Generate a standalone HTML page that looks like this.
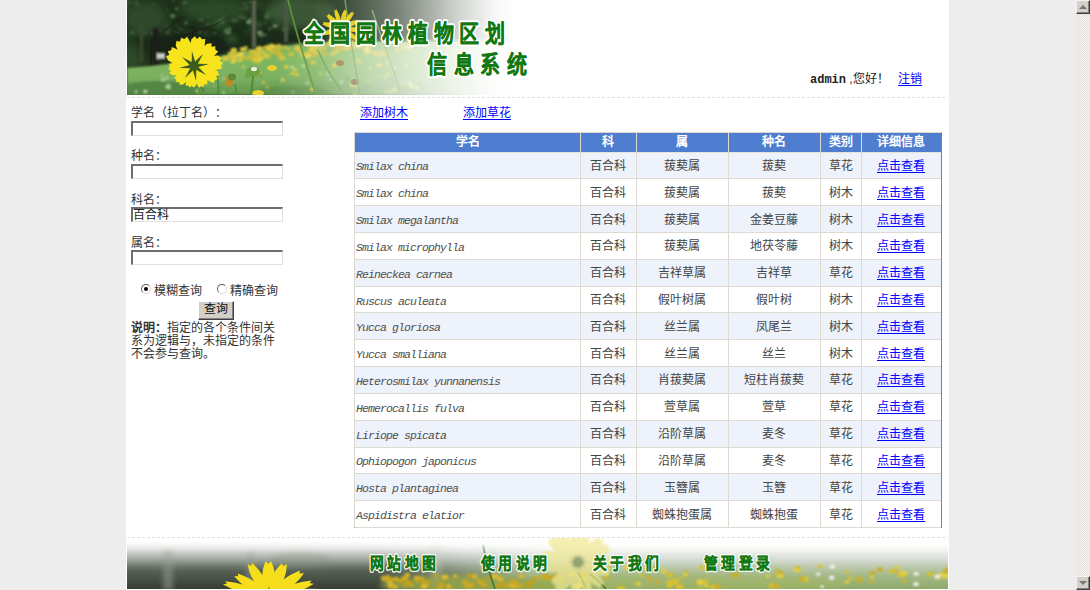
<!DOCTYPE html>
<html lang="zh-CN"><head><meta charset="utf-8">
<style>
*{margin:0;padding:0;box-sizing:border-box}
html,body{text-spacing-trim:space-all;width:1090px;height:590px;overflow:hidden;background:#ededed;font-family:"Liberation Sans",sans-serif;font-size:12px;color:#222}
.abs{position:absolute}
#wrap{position:absolute;left:126px;top:0;width:823px;height:590px;background:#fff}
.dots{position:absolute;height:1px;background:repeating-linear-gradient(to right,#e0e0e0 0 3px,transparent 3px 5px)}
a{color:#0000ff;text-decoration:underline;text-underline-offset:2px}
.lbl{margin-top:1px;position:absolute;left:131px;font-size:12px;line-height:12px;color:#333;white-space:nowrap}
.inp{position:absolute;left:131px;width:152px;height:15px;background:#fff;border-top:2px solid #6e6e6e;border-left:2px solid #6e6e6e;border-right:1px solid #e2e0d8;border-bottom:1px solid #e2e0d8}
.row{position:absolute;left:355px;width:586px}
.hl{position:absolute;left:355px;width:586px;height:1px;background:#dedad2}
.vl{position:absolute;width:1px;background:#dedad2}
.c{position:absolute;transform:translateY(-50%);white-space:nowrap;line-height:14px}
.cn{margin-top:1px;text-align:center;font-size:12px;color:#444}
.sci{margin-top:2.5px;margin-left:-1px;font-family:"Liberation Mono",monospace;font-style:italic;font-size:11.5px;letter-spacing:-0.9px;color:#505050}
.th{position:absolute;top:133px;height:19px;line-height:19px;text-align:center;color:#fff;font-weight:bold;font-size:12px}
.title{position:absolute;font-family:"Liberation Serif",serif;font-weight:bold;color:#167a16;font-size:22px;line-height:24px;letter-spacing:3px;white-space:nowrap;
text-shadow:1px 0 #fff,-1px 0 #fff,0 1px #fff,0 -1px #fff,1px 1px #fff,-1px -1px #fff,1px -1px #fff,-1px 1px #fff,2px 0 #fff,-2px 0 #fff,0 2px #fff,0 -2px #fff}
.ft{position:absolute;top:555px;font-family:"Liberation Serif",serif;font-weight:bold;color:#167a16;font-size:15px;line-height:16px;letter-spacing:3px;white-space:nowrap;
text-shadow:1px 0 #fff,-1px 0 #fff,0 1px #fff,0 -1px #fff,1px 1px #fff,-1px -1px #fff,1px -1px #fff,-1px 1px #fff}
</style></head><body>
<div id="wrap"></div>
<svg class="abs" style="left:127px;top:0" width="421" height="95" viewBox="127 0 421 95">
<defs>
<linearGradient id="hf" x1="0" y1="0" x2="0" y2="1"><stop offset="0" stop-color="#1e301b"/><stop offset=".5" stop-color="#192a17"/><stop offset="1" stop-color="#2a4224"/></linearGradient>
<linearGradient id="hg" x1="0" y1="0" x2="0" y2="1"><stop offset="0" stop-color="#66a446"/><stop offset=".3" stop-color="#7eb85e"/><stop offset=".7" stop-color="#7cb062"/><stop offset="1" stop-color="#62944e"/></linearGradient>
<linearGradient id="hz" x1="0" y1="0" x2="1" y2="0"><stop offset="0" stop-color="#fff" stop-opacity="0"/><stop offset=".44" stop-color="#fff" stop-opacity="0"/><stop offset=".52" stop-color="#fff" stop-opacity=".15"/><stop offset=".64" stop-color="#fff" stop-opacity=".4"/><stop offset=".78" stop-color="#fff" stop-opacity=".78"/><stop offset=".87" stop-color="#fff" stop-opacity=".96"/><stop offset=".92" stop-color="#fff" stop-opacity="1"/></linearGradient>
<filter id="b1" x="-10%" y="-10%" width="120%" height="120%"><feGaussianBlur stdDeviation="1"/></filter>
<filter id="b2" x="-20%" y="-20%" width="140%" height="140%"><feGaussianBlur stdDeviation="2.5"/></filter>
<filter id="b4" x="-30%" y="-30%" width="160%" height="160%"><feGaussianBlur stdDeviation="5"/></filter>
<filter id="b05" x="-10%" y="-10%" width="120%" height="120%"><feGaussianBlur stdDeviation="0.6"/></filter>
</defs>
<rect x="127" y="0" width="421" height="95" fill="url(#hf)"/>
<g filter="url(#b2)">
<ellipse cx="218.8" cy="22.4" rx="8.0" ry="5.7" fill="#32502e" opacity="1"/>
<ellipse cx="218.7" cy="34.2" rx="3.9" ry="2.8" fill="#243c22" opacity="1"/>
<ellipse cx="223.6" cy="24.6" rx="3.8" ry="2.7" fill="#32502e" opacity="1"/>
<ellipse cx="188.6" cy="3.6" rx="7.3" ry="5.2" fill="#243c22" opacity="1"/>
<ellipse cx="255.8" cy="23.8" rx="5.0" ry="3.6" fill="#32502e" opacity="1"/>
<ellipse cx="259.7" cy="24.6" rx="3.7" ry="2.6" fill="#2a4626" opacity="1"/>
<ellipse cx="295.8" cy="2.5" rx="3.0" ry="2.1" fill="#2a4626" opacity="1"/>
<ellipse cx="248.7" cy="31.1" rx="4.6" ry="3.3" fill="#243c22" opacity="1"/>
<ellipse cx="298.0" cy="20.8" rx="6.4" ry="4.6" fill="#32502e" opacity="1"/>
<ellipse cx="127.9" cy="3.4" rx="6.5" ry="4.6" fill="#32502e" opacity="1"/>
<ellipse cx="329.5" cy="39.8" rx="7.5" ry="5.4" fill="#243c22" opacity="1"/>
<ellipse cx="178.6" cy="30.3" rx="5.7" ry="4.1" fill="#2a4626" opacity="1"/>
<ellipse cx="141.3" cy="30.7" rx="5.0" ry="3.6" fill="#32502e" opacity="1"/>
<ellipse cx="205.5" cy="38.3" rx="7.5" ry="5.4" fill="#2a4626" opacity="1"/>
<ellipse cx="170.3" cy="37.1" rx="3.1" ry="2.2" fill="#32502e" opacity="1"/>
<ellipse cx="326.0" cy="15.9" rx="3.2" ry="2.3" fill="#243c22" opacity="1"/>
<ellipse cx="167.3" cy="27.0" rx="4.7" ry="3.3" fill="#32502e" opacity="1"/>
<ellipse cx="194.5" cy="38.6" rx="7.0" ry="5.0" fill="#2a4626" opacity="1"/>
<ellipse cx="154.3" cy="28.3" rx="2.9" ry="2.0" fill="#32502e" opacity="1"/>
<ellipse cx="288.8" cy="7.1" rx="5.9" ry="4.2" fill="#32502e" opacity="1"/>
<ellipse cx="230.3" cy="39.4" rx="7.1" ry="5.1" fill="#32502e" opacity="1"/>
<ellipse cx="257.7" cy="4.7" rx="5.2" ry="3.7" fill="#2a4626" opacity="1"/>
<ellipse cx="127.1" cy="34.6" rx="8.3" ry="5.9" fill="#243c22" opacity="1"/>
<ellipse cx="188.7" cy="35.4" rx="4.0" ry="2.8" fill="#32502e" opacity="1"/>
<ellipse cx="329.2" cy="24.1" rx="6.0" ry="4.3" fill="#2a4626" opacity="1"/>
</g>
<g filter="url(#b1)">
<ellipse cx="248.7" cy="7.5" rx="1.6" ry="1.2" fill="#3a5a34" opacity="1"/>
<ellipse cx="167.5" cy="10.4" rx="1.3" ry="0.9" fill="#44643c" opacity="1"/>
<ellipse cx="152.7" cy="22.3" rx="1.2" ry="0.8" fill="#50704a" opacity="1"/>
<ellipse cx="172.7" cy="15.9" rx="3.0" ry="2.1" fill="#50704a" opacity="1"/>
<ellipse cx="229.4" cy="4.8" rx="1.9" ry="1.3" fill="#3a5a34" opacity="1"/>
<ellipse cx="146.0" cy="31.8" rx="2.7" ry="1.9" fill="#44643c" opacity="1"/>
<ellipse cx="216.2" cy="5.5" rx="2.4" ry="1.7" fill="#3a5a34" opacity="1"/>
<ellipse cx="151.2" cy="33.3" rx="2.8" ry="2.0" fill="#3a5a34" opacity="1"/>
<ellipse cx="136.7" cy="1.7" rx="1.3" ry="1.0" fill="#3a5a34" opacity="1"/>
<ellipse cx="245.4" cy="8.3" rx="2.5" ry="1.8" fill="#50704a" opacity="1"/>
<ellipse cx="178.8" cy="31.7" rx="2.1" ry="1.5" fill="#3a5a34" opacity="1"/>
<ellipse cx="148.6" cy="25.2" rx="1.3" ry="0.9" fill="#44643c" opacity="1"/>
<ellipse cx="186.0" cy="22.9" rx="2.3" ry="1.7" fill="#44643c" opacity="1"/>
<ellipse cx="161.5" cy="32.1" rx="1.5" ry="1.1" fill="#44643c" opacity="1"/>
<ellipse cx="135.5" cy="14.4" rx="1.6" ry="1.1" fill="#44643c" opacity="1"/>
<ellipse cx="148.7" cy="12.9" rx="2.2" ry="1.6" fill="#44643c" opacity="1"/>
<ellipse cx="138.3" cy="4.8" rx="2.0" ry="1.4" fill="#50704a" opacity="1"/>
<ellipse cx="207.8" cy="24.2" rx="2.3" ry="1.6" fill="#44643c" opacity="1"/>
<ellipse cx="199.6" cy="32.3" rx="2.1" ry="1.5" fill="#50704a" opacity="1"/>
<ellipse cx="213.2" cy="33.7" rx="1.2" ry="0.8" fill="#3a5a34" opacity="1"/>
<ellipse cx="136.2" cy="2.4" rx="1.7" ry="1.2" fill="#44643c" opacity="1"/>
<ellipse cx="249.9" cy="2.6" rx="2.2" ry="1.6" fill="#3a5a34" opacity="1"/>
<ellipse cx="132.5" cy="32.8" rx="2.6" ry="1.8" fill="#44643c" opacity="1"/>
<ellipse cx="224.6" cy="32.0" rx="1.8" ry="1.3" fill="#3a5a34" opacity="1"/>
<ellipse cx="185.2" cy="2.7" rx="2.8" ry="2.0" fill="#44643c" opacity="1"/>
<ellipse cx="233.2" cy="20.0" rx="2.3" ry="1.7" fill="#50704a" opacity="1"/>
<ellipse cx="173.6" cy="0.4" rx="1.3" ry="0.9" fill="#44643c" opacity="1"/>
<ellipse cx="205.6" cy="34.8" rx="2.8" ry="2.0" fill="#3a5a34" opacity="1"/>
<ellipse cx="167.6" cy="32.7" rx="2.5" ry="1.8" fill="#50704a" opacity="1"/>
<ellipse cx="181.2" cy="29.3" rx="1.3" ry="0.9" fill="#3a5a34" opacity="1"/>
<ellipse cx="130.7" cy="21.0" rx="2.1" ry="1.5" fill="#44643c" opacity="1"/>
<ellipse cx="244.8" cy="4.0" rx="2.6" ry="1.9" fill="#3a5a34" opacity="1"/>
<ellipse cx="240.2" cy="9.0" rx="1.1" ry="0.8" fill="#50704a" opacity="1"/>
<ellipse cx="144.6" cy="21.4" rx="2.1" ry="1.5" fill="#50704a" opacity="1"/>
<ellipse cx="208.2" cy="15.5" rx="2.9" ry="2.0" fill="#50704a" opacity="1"/>
<ellipse cx="176.8" cy="8.8" rx="2.4" ry="1.7" fill="#44643c" opacity="1"/>
<ellipse cx="235.3" cy="13.5" rx="2.3" ry="1.6" fill="#50704a" opacity="1"/>
<ellipse cx="152.8" cy="4.7" rx="1.8" ry="1.3" fill="#44643c" opacity="1"/>
<ellipse cx="214.5" cy="33.3" rx="1.7" ry="1.2" fill="#44643c" opacity="1"/>
<ellipse cx="140.9" cy="16.5" rx="2.9" ry="2.1" fill="#50704a" opacity="1"/>
<ellipse cx="249.7" cy="20.6" rx="2.6" ry="1.9" fill="#4a6a44" opacity="1"/>
<ellipse cx="309.1" cy="34.5" rx="2.1" ry="1.5" fill="#5a7a52" opacity="1"/>
<ellipse cx="307.7" cy="13.3" rx="2.5" ry="1.8" fill="#4a6a44" opacity="1"/>
<ellipse cx="292.1" cy="22.1" rx="1.8" ry="1.3" fill="#4a6a44" opacity="1"/>
<ellipse cx="202.5" cy="9.1" rx="2.1" ry="1.5" fill="#5a7a52" opacity="1"/>
<ellipse cx="300.0" cy="13.0" rx="2.9" ry="2.0" fill="#5a7a52" opacity="1"/>
<ellipse cx="327.9" cy="8.5" rx="1.4" ry="1.0" fill="#4a6a44" opacity="1"/>
<ellipse cx="285.2" cy="29.2" rx="3.3" ry="2.3" fill="#4a6a44" opacity="1"/>
<ellipse cx="225.7" cy="29.7" rx="1.7" ry="1.2" fill="#4a6a44" opacity="1"/>
<ellipse cx="201.4" cy="19.2" rx="2.7" ry="1.9" fill="#5a7a52" opacity="1"/>
<ellipse cx="229.4" cy="28.4" rx="2.3" ry="1.7" fill="#4a6a44" opacity="1"/>
<ellipse cx="265.1" cy="34.9" rx="1.5" ry="1.1" fill="#4a6a44" opacity="1"/>
<ellipse cx="317.8" cy="7.6" rx="3.2" ry="2.3" fill="#4a6a44" opacity="1"/>
<ellipse cx="250.4" cy="18.5" rx="1.6" ry="1.1" fill="#5a7a52" opacity="1"/>
<ellipse cx="249.0" cy="22.1" rx="3.1" ry="2.2" fill="#6a8a60" opacity="1"/>
<ellipse cx="260.3" cy="24.5" rx="1.6" ry="1.1" fill="#4a6a44" opacity="1"/>
<ellipse cx="312.6" cy="28.9" rx="3.2" ry="2.3" fill="#5a7a52" opacity="1"/>
<ellipse cx="227.7" cy="32.0" rx="3.3" ry="2.4" fill="#6a8a60" opacity="1"/>
<ellipse cx="269.8" cy="28.7" rx="1.8" ry="1.3" fill="#4a6a44" opacity="1"/>
<ellipse cx="311.3" cy="15.5" rx="1.3" ry="0.9" fill="#6a8a60" opacity="1"/>
<ellipse cx="244.5" cy="17.6" rx="1.7" ry="1.2" fill="#5a7a52" opacity="1"/>
<ellipse cx="228.4" cy="31.0" rx="2.1" ry="1.5" fill="#5a7a52" opacity="1"/>
<ellipse cx="222.5" cy="15.1" rx="2.9" ry="2.1" fill="#5a7a52" opacity="1"/>
<ellipse cx="261.2" cy="35.0" rx="3.1" ry="2.2" fill="#4a6a44" opacity="1"/>
<ellipse cx="309.2" cy="25.7" rx="3.2" ry="2.3" fill="#6a8a60" opacity="1"/>
<ellipse cx="275.3" cy="25.7" rx="2.8" ry="2.0" fill="#6a8a60" opacity="1"/>
<ellipse cx="268.5" cy="13.7" rx="2.8" ry="2.0" fill="#4a6a44" opacity="1"/>
<ellipse cx="221.4" cy="20.4" rx="3.2" ry="2.3" fill="#6a8a60" opacity="1"/>
<ellipse cx="240.5" cy="16.4" rx="3.0" ry="2.2" fill="#4a6a44" opacity="1"/>
<ellipse cx="227.1" cy="30.5" rx="3.3" ry="2.3" fill="#4a6a44" opacity="1"/>
<ellipse cx="235.5" cy="19.9" rx="2.0" ry="1.5" fill="#5a7a52" opacity="1"/>
<ellipse cx="265.4" cy="23.2" rx="1.2" ry="0.8" fill="#5a7a52" opacity="1"/>
<ellipse cx="267.1" cy="17.0" rx="2.9" ry="2.1" fill="#4a6a44" opacity="1"/>
<ellipse cx="215.9" cy="7.8" rx="1.5" ry="1.1" fill="#4a6a44" opacity="1"/>
<ellipse cx="259.7" cy="32.6" rx="2.9" ry="2.1" fill="#6a8a60" opacity="1"/>
</g>
<g fill="none" stroke="#1c1e16" filter="url(#b05)" opacity=".8">
<path d="M150,80 L152,40 L140,15 L130,5" stroke-width="2"/>
<path d="M152,40 L175,22 L200,8" stroke-width="1.5"/>
<path d="M145,28 L127,14" stroke-width="1.2"/>
<path d="M170,26 L185,35 L215,25 L240,10" stroke-width="1.2"/>
<path d="M190,50 L195,20" stroke-width="1.2"/>
</g>
<g filter="url(#b4)">
<ellipse cx="145" cy="18" rx="22" ry="16" fill="#2e4a2a"/>
<ellipse cx="215" cy="10" rx="35" ry="12" fill="#2c4828"/>
<ellipse cx="300" cy="12" rx="35" ry="16" fill="#3a5636"/>
<ellipse cx="190" cy="45" rx="40" ry="12" fill="#162414"/>
<ellipse cx="130" cy="60" rx="12" ry="18" fill="#2a4a28"/>
</g>
<g filter="url(#b1)">
<rect x="153" y="28" width="5" height="52" fill="#1a1f14"/>
<rect x="140" y="22" width="3" height="40" fill="#3a4632"/>
<rect x="252" y="0" width="4" height="48" fill="#5a6450"/>
<rect x="284" y="0" width="4" height="42" fill="#4a5644"/>
<rect x="157" y="53" width="8" height="6" fill="#c8ccc0"/>
</g>
<path d="M127,68 L150,66 L185,62 L220,56 L250,50 L290,45 L330,42 L420,40 L548,38 L548,95 L127,95Z" fill="url(#hg)" filter="url(#b1)"/>
<g filter="url(#b1)">
<ellipse cx="160" cy="90" rx="45" ry="9" fill="#4e7e40" opacity=".8"/>
<ellipse cx="290" cy="92" rx="40" ry="6" fill="#5a8a48" opacity=".6"/>
<ellipse cx="263.1" cy="52.4" rx="2.1" ry="1.4" fill="#e4d048"/>
<ellipse cx="384.3" cy="52.9" rx="4.0" ry="2.7" fill="#c8b838"/>
<ellipse cx="238.5" cy="54.1" rx="1.9" ry="1.2" fill="#c8b838"/>
<ellipse cx="241.7" cy="58.8" rx="1.9" ry="1.2" fill="#dcc83c"/>
<ellipse cx="245.6" cy="47.7" rx="2.5" ry="1.7" fill="#c8b838"/>
<ellipse cx="259.2" cy="53.1" rx="3.0" ry="2.0" fill="#d0c040"/>
<ellipse cx="366.7" cy="48.9" rx="3.5" ry="2.3" fill="#e4d048"/>
<ellipse cx="225.5" cy="58.5" rx="3.8" ry="2.5" fill="#dcc83c"/>
<ellipse cx="304.6" cy="54.8" rx="3.1" ry="2.1" fill="#dcc83c"/>
<ellipse cx="303.6" cy="54.7" rx="3.3" ry="2.2" fill="#dcc83c"/>
<ellipse cx="257.4" cy="56.6" rx="3.7" ry="2.5" fill="#dcc83c"/>
<ellipse cx="270.5" cy="49.6" rx="4.0" ry="2.7" fill="#dcc83c"/>
<ellipse cx="340.2" cy="43.5" rx="2.0" ry="1.4" fill="#dcc83c"/>
<ellipse cx="242.1" cy="49.1" rx="2.7" ry="1.8" fill="#e4d048"/>
<ellipse cx="359.6" cy="46.2" rx="3.7" ry="2.5" fill="#dcc83c"/>
<ellipse cx="252.5" cy="55.6" rx="3.7" ry="2.5" fill="#d0c040"/>
<ellipse cx="252.5" cy="56.3" rx="4.0" ry="2.7" fill="#c8b838"/>
<ellipse cx="239.5" cy="55.2" rx="3.6" ry="2.4" fill="#dcc83c"/>
<ellipse cx="349.0" cy="47.3" rx="1.9" ry="1.2" fill="#e4d048"/>
<ellipse cx="244.3" cy="50.2" rx="2.3" ry="1.5" fill="#dcc83c"/>
<ellipse cx="416.5" cy="52.1" rx="2.0" ry="1.4" fill="#d0c040"/>
<ellipse cx="242.4" cy="57.4" rx="2.0" ry="1.3" fill="#d0c040"/>
<ellipse cx="272.3" cy="51.6" rx="3.0" ry="2.0" fill="#e4d048"/>
<ellipse cx="253.9" cy="51.9" rx="3.3" ry="2.2" fill="#d0c040"/>
<ellipse cx="363.9" cy="42.8" rx="2.9" ry="1.9" fill="#c8b838"/>
<ellipse cx="284.8" cy="46.9" rx="2.2" ry="1.5" fill="#d0c040"/>
<ellipse cx="271.8" cy="46.3" rx="3.8" ry="2.5" fill="#e4d048"/>
<ellipse cx="308.4" cy="45.1" rx="3.2" ry="2.1" fill="#c8b838"/>
<ellipse cx="349.7" cy="44.2" rx="4.0" ry="2.7" fill="#dcc83c"/>
<ellipse cx="353.3" cy="46.2" rx="4.0" ry="2.6" fill="#c8b838"/>
<ellipse cx="336.2" cy="51.6" rx="2.8" ry="1.8" fill="#dcc83c"/>
<ellipse cx="232.7" cy="53.7" rx="2.9" ry="2.0" fill="#d0c040"/>
<ellipse cx="379.7" cy="53.8" rx="4.0" ry="2.6" fill="#d0c040"/>
<ellipse cx="257.3" cy="59.5" rx="3.4" ry="2.3" fill="#c8b838"/>
<ellipse cx="254.8" cy="52.2" rx="2.2" ry="1.5" fill="#d0c040"/>
<ellipse cx="282.3" cy="58.3" rx="3.3" ry="2.2" fill="#d0c040"/>
<ellipse cx="334.2" cy="54.6" rx="1.9" ry="1.2" fill="#d0c040"/>
<ellipse cx="328.7" cy="44.7" rx="2.8" ry="1.8" fill="#d0c040"/>
<ellipse cx="334.1" cy="50.0" rx="1.8" ry="1.2" fill="#c8b838"/>
<ellipse cx="260.1" cy="58.7" rx="3.1" ry="2.1" fill="#e4d048"/>
<ellipse cx="408.2" cy="47.2" rx="4.2" ry="2.8" fill="#e4d048"/>
<ellipse cx="351.4" cy="41.6" rx="3.2" ry="2.2" fill="#d0c040"/>
<ellipse cx="281.8" cy="57.5" rx="2.7" ry="1.8" fill="#dcc83c"/>
<ellipse cx="368.0" cy="47.7" rx="3.2" ry="2.2" fill="#e4d048"/>
<ellipse cx="400.3" cy="45.3" rx="3.1" ry="2.0" fill="#c8b838"/>
<ellipse cx="278.5" cy="48.6" rx="3.4" ry="2.2" fill="#c8b838"/>
<ellipse cx="319.6" cy="52.2" rx="1.9" ry="1.2" fill="#dcc83c"/>
<ellipse cx="310.3" cy="51.2" rx="2.8" ry="1.9" fill="#e4d048"/>
<ellipse cx="230.0" cy="53.6" rx="2.8" ry="1.8" fill="#c8b838"/>
<ellipse cx="233.2" cy="61.5" rx="2.8" ry="1.9" fill="#e4d048"/>
<ellipse cx="260.1" cy="56.6" rx="1.9" ry="1.3" fill="#d0c040"/>
<ellipse cx="397.4" cy="49.6" rx="2.9" ry="1.9" fill="#dcc83c"/>
<ellipse cx="312.4" cy="43.8" rx="3.3" ry="2.2" fill="#e4d048"/>
<ellipse cx="239.9" cy="60.2" rx="2.7" ry="1.8" fill="#dcc83c"/>
<ellipse cx="240.9" cy="54.2" rx="3.4" ry="2.3" fill="#e4d048"/>
<ellipse cx="312.1" cy="51.1" rx="3.4" ry="2.3" fill="#c8b838"/>
<ellipse cx="340.1" cy="48.2" rx="4.2" ry="2.8" fill="#c8b838"/>
<ellipse cx="328.1" cy="44.5" rx="2.1" ry="1.4" fill="#c8b838"/>
<ellipse cx="342.4" cy="49.5" rx="2.7" ry="1.8" fill="#c8b838"/>
<ellipse cx="313.2" cy="52.3" rx="3.5" ry="2.3" fill="#dcc83c"/>
<ellipse cx="316.0" cy="52.5" rx="2.3" ry="1.5" fill="#dcc83c"/>
<ellipse cx="300.3" cy="52.1" rx="2.3" ry="1.5" fill="#d0c040"/>
<ellipse cx="315.4" cy="42.1" rx="2.4" ry="1.6" fill="#d0c040"/>
<ellipse cx="314.8" cy="43.4" rx="3.1" ry="2.1" fill="#d0c040"/>
<ellipse cx="332.1" cy="53.7" rx="2.2" ry="1.5" fill="#dcc83c"/>
<ellipse cx="315.7" cy="47.2" rx="2.9" ry="2.0" fill="#dcc83c"/>
<ellipse cx="274.1" cy="51.9" rx="2.1" ry="1.4" fill="#d0c040"/>
<ellipse cx="348.8" cy="46.8" rx="3.8" ry="2.5" fill="#dcc83c"/>
<ellipse cx="291.1" cy="54.1" rx="2.7" ry="1.8" fill="#dcc83c"/>
<ellipse cx="279.0" cy="53.7" rx="4.2" ry="2.8" fill="#c8b838"/>
<ellipse cx="266.5" cy="56.1" rx="3.8" ry="2.5" fill="#dcc83c"/>
<ellipse cx="288.4" cy="49.0" rx="2.0" ry="1.4" fill="#c8b838"/>
<ellipse cx="233.9" cy="49.9" rx="3.2" ry="2.1" fill="#e4d048"/>
<ellipse cx="353.5" cy="47.0" rx="3.8" ry="2.5" fill="#d0c040"/>
<ellipse cx="233.6" cy="51.8" rx="3.4" ry="2.3" fill="#d0c040"/>
<ellipse cx="323.4" cy="48.4" rx="3.6" ry="2.4" fill="#c8b838"/>
<ellipse cx="265.3" cy="47.6" rx="2.7" ry="1.8" fill="#c8b838"/>
<ellipse cx="278.6" cy="46.2" rx="3.5" ry="2.3" fill="#c8b838"/>
<ellipse cx="290.1" cy="55.0" rx="2.5" ry="1.7" fill="#c8b838"/>
<ellipse cx="255.6" cy="60.0" rx="3.6" ry="2.4" fill="#dcc83c"/>
<ellipse cx="234.8" cy="60.3" rx="1.9" ry="1.2" fill="#e4d048"/>
<ellipse cx="310.2" cy="53.5" rx="3.6" ry="2.4" fill="#c8b838"/>
<ellipse cx="346.9" cy="48.2" rx="3.8" ry="2.5" fill="#dcc83c"/>
<ellipse cx="248.8" cy="57.8" rx="3.9" ry="2.6" fill="#c8b838"/>
<ellipse cx="352.3" cy="43.6" rx="1.9" ry="1.3" fill="#dcc83c"/>
<ellipse cx="308.1" cy="56.0" rx="3.4" ry="2.2" fill="#e4d048"/>
<ellipse cx="231.7" cy="56.6" rx="3.7" ry="2.5" fill="#d0c040"/>
<ellipse cx="273.5" cy="48.8" rx="2.1" ry="1.4" fill="#c8b838"/>
<ellipse cx="234.9" cy="57.5" rx="2.1" ry="1.4" fill="#e4d048"/>
<ellipse cx="259.3" cy="49.2" rx="3.6" ry="2.4" fill="#c8b838"/>
<ellipse cx="335.3" cy="46.4" rx="2.6" ry="1.7" fill="#c8b838"/>
<ellipse cx="320.7" cy="48.5" rx="3.1" ry="2.1" fill="#d0c040"/>
<ellipse cx="325.0" cy="54.1" rx="2.8" ry="1.9" fill="#c8b838"/>
<ellipse cx="367.3" cy="51.5" rx="3.8" ry="2.5" fill="#e4d048"/>
<ellipse cx="404.8" cy="48.3" rx="3.1" ry="2.0" fill="#d0c040"/>
<ellipse cx="348.8" cy="46.5" rx="2.8" ry="1.9" fill="#dcc83c"/>
<ellipse cx="259.3" cy="48.3" rx="3.3" ry="2.2" fill="#dcc83c"/>
<ellipse cx="271.3" cy="50.6" rx="3.1" ry="2.0" fill="#c8b838"/>
<ellipse cx="409.1" cy="40.1" rx="2.5" ry="1.7" fill="#d0c040"/>
<ellipse cx="268.6" cy="47.5" rx="4.0" ry="2.7" fill="#d0c040"/>
<ellipse cx="331.1" cy="41.2" rx="3.0" ry="2.0" fill="#d0c040"/>
<ellipse cx="270.0" cy="48.0" rx="2.7" ry="1.8" fill="#dcc83c"/>
<ellipse cx="312.0" cy="48.8" rx="3.0" ry="2.0" fill="#e4d048"/>
<ellipse cx="250.1" cy="51.0" rx="2.2" ry="1.5" fill="#c8b838"/>
<ellipse cx="315.2" cy="55.2" rx="3.1" ry="2.1" fill="#c8b838"/>
<ellipse cx="297.6" cy="48.8" rx="4.1" ry="2.7" fill="#d0c040"/>
<ellipse cx="297.2" cy="46.3" rx="1.9" ry="1.3" fill="#dcc83c"/>
<ellipse cx="348.5" cy="46.0" rx="3.1" ry="2.0" fill="#c8b838"/>
<ellipse cx="343.6" cy="41.5" rx="4.0" ry="2.7" fill="#d0c040"/>
<ellipse cx="374.7" cy="52.7" rx="2.9" ry="1.9" fill="#dcc83c"/>
<ellipse cx="368.4" cy="81.2" rx="1.7" ry="1.2" fill="#e0d040" opacity="1"/>
<ellipse cx="378.9" cy="65.1" rx="2.9" ry="2.1" fill="#e0d040" opacity="1"/>
<ellipse cx="354.7" cy="94.8" rx="1.8" ry="1.3" fill="#e0d040" opacity="1"/>
<ellipse cx="267.1" cy="87.0" rx="1.4" ry="1.0" fill="#e0d040" opacity="1"/>
<ellipse cx="388.0" cy="62.9" rx="1.9" ry="1.3" fill="#e0d040" opacity="1"/>
<ellipse cx="400.1" cy="84.3" rx="1.5" ry="1.1" fill="#d8c838" opacity="1"/>
<ellipse cx="243.4" cy="66.6" rx="1.7" ry="1.2" fill="#e0d040" opacity="1"/>
<ellipse cx="380.7" cy="75.4" rx="1.5" ry="1.0" fill="#d8c838" opacity="1"/>
<ellipse cx="334.6" cy="65.5" rx="2.8" ry="2.0" fill="#d8c838" opacity="1"/>
<ellipse cx="296.9" cy="74.2" rx="2.3" ry="1.7" fill="#d8c838" opacity="1"/>
<ellipse cx="360.1" cy="62.3" rx="1.5" ry="1.1" fill="#e0d040" opacity="1"/>
<ellipse cx="259.0" cy="73.8" rx="2.2" ry="1.6" fill="#e0d040" opacity="1"/>
<ellipse cx="357.7" cy="60.4" rx="2.0" ry="1.5" fill="#d8c838" opacity="1"/>
<ellipse cx="282.7" cy="79.7" rx="2.2" ry="1.5" fill="#e0d040" opacity="1"/>
<ellipse cx="394.1" cy="89.6" rx="2.6" ry="1.9" fill="#e0d040" opacity="1"/>
<ellipse cx="292.3" cy="73.2" rx="2.3" ry="1.6" fill="#d8c838" opacity="1"/>
<ellipse cx="411.7" cy="86.4" rx="2.3" ry="1.7" fill="#e0d040" opacity="1"/>
<ellipse cx="286.2" cy="67.0" rx="2.6" ry="1.9" fill="#d8c838" opacity="1"/>
<ellipse cx="295.7" cy="69.6" rx="2.2" ry="1.6" fill="#d8c838" opacity="1"/>
<ellipse cx="320.4" cy="73.4" rx="1.6" ry="1.1" fill="#e0d040" opacity="1"/>
<ellipse cx="263.7" cy="82.1" rx="1.7" ry="1.2" fill="#e0d040" opacity="1"/>
<ellipse cx="312.4" cy="89.3" rx="2.4" ry="1.7" fill="#e0d040" opacity="1"/>
<ellipse cx="258.1" cy="61.1" rx="3.1" ry="2.2" fill="#d8c838" opacity="1"/>
<ellipse cx="313.2" cy="62.5" rx="2.9" ry="2.1" fill="#d8c838" opacity="1"/>
<ellipse cx="406.8" cy="64.9" rx="1.7" ry="1.2" fill="#e0d040" opacity="1"/>
<ellipse cx="387.8" cy="73.5" rx="2.0" ry="1.4" fill="#d8c838" opacity="1"/>
<ellipse cx="352.1" cy="85.4" rx="2.4" ry="1.7" fill="#d8c838" opacity="1"/>
<ellipse cx="416.8" cy="87.6" rx="2.5" ry="1.8" fill="#e0d040" opacity="1"/>
<ellipse cx="286.9" cy="66.6" rx="1.9" ry="1.4" fill="#d8c838" opacity="1"/>
<ellipse cx="259.1" cy="73.2" rx="2.3" ry="1.6" fill="#d8c838" opacity="1"/>
<ellipse cx="368.8" cy="82.2" rx="1.3" ry="0.9" fill="#5a9040" opacity="1"/>
<ellipse cx="391.6" cy="80.1" rx="1.5" ry="1.0" fill="#5a9040" opacity="1"/>
<ellipse cx="277.4" cy="80.9" rx="1.3" ry="0.9" fill="#5a9040" opacity="1"/>
<ellipse cx="419.5" cy="85.3" rx="2.0" ry="1.5" fill="#5a9040" opacity="1"/>
<ellipse cx="403.9" cy="82.7" rx="1.3" ry="0.9" fill="#b0d898" opacity="1"/>
<ellipse cx="166.9" cy="77.8" rx="1.5" ry="1.1" fill="#c0e0a8" opacity="1"/>
<ellipse cx="223.5" cy="92.7" rx="1.5" ry="1.1" fill="#c0e0a8" opacity="1"/>
<ellipse cx="385.7" cy="76.9" rx="1.8" ry="1.3" fill="#b0d898" opacity="1"/>
<ellipse cx="391.9" cy="79.9" rx="1.7" ry="1.2" fill="#5a9040" opacity="1"/>
<ellipse cx="395.1" cy="67.6" rx="1.9" ry="1.3" fill="#c0e0a8" opacity="1"/>
<ellipse cx="303.2" cy="66.0" rx="1.9" ry="1.4" fill="#c0e0a8" opacity="1"/>
<ellipse cx="327.7" cy="74.0" rx="1.9" ry="1.3" fill="#c0e0a8" opacity="1"/>
<ellipse cx="370.4" cy="68.1" rx="1.7" ry="1.2" fill="#b0d898" opacity="1"/>
<ellipse cx="260.1" cy="75.3" rx="1.9" ry="1.3" fill="#5a9040" opacity="1"/>
<ellipse cx="167.5" cy="87.0" rx="2.0" ry="1.4" fill="#c0e0a8" opacity="1"/>
<ellipse cx="307.3" cy="83.1" rx="1.9" ry="1.3" fill="#b0d898" opacity="1"/>
<ellipse cx="185.5" cy="77.4" rx="1.3" ry="0.9" fill="#c0e0a8" opacity="1"/>
<ellipse cx="161.7" cy="75.4" rx="1.4" ry="1.0" fill="#b0d898" opacity="1"/>
<ellipse cx="204.3" cy="80.7" rx="1.4" ry="1.0" fill="#5a9040" opacity="1"/>
<ellipse cx="356.7" cy="85.8" rx="1.9" ry="1.4" fill="#c0e0a8" opacity="1"/>
<ellipse cx="408.1" cy="81.8" rx="1.6" ry="1.1" fill="#c0e0a8" opacity="1"/>
<ellipse cx="389.7" cy="92.1" rx="1.7" ry="1.2" fill="#c0e0a8" opacity="1"/>
<ellipse cx="347.3" cy="78.0" rx="2.1" ry="1.5" fill="#5a9040" opacity="1"/>
<ellipse cx="246.8" cy="76.3" rx="1.7" ry="1.2" fill="#5a9040" opacity="1"/>
<ellipse cx="223.8" cy="79.2" rx="1.5" ry="1.1" fill="#b0d898" opacity="1"/>
<ellipse cx="221.0" cy="63.8" rx="1.8" ry="1.3" fill="#c0e0a8" opacity="1"/>
<ellipse cx="341.5" cy="81.7" rx="1.9" ry="1.3" fill="#c0e0a8" opacity="1"/>
<ellipse cx="385.6" cy="90.9" rx="1.4" ry="1.0" fill="#c0e0a8" opacity="1"/>
<ellipse cx="198.0" cy="90.8" rx="2.1" ry="1.5" fill="#c0e0a8" opacity="1"/>
<ellipse cx="330.6" cy="79.4" rx="1.4" ry="1.0" fill="#c0e0a8" opacity="1"/>
<ellipse cx="319.5" cy="93.0" rx="2.0" ry="1.4" fill="#5a9040" opacity="1"/>
<ellipse cx="410.2" cy="84.0" rx="2.0" ry="1.4" fill="#c0e0a8" opacity="1"/>
<ellipse cx="292.2" cy="67.4" rx="1.8" ry="1.3" fill="#c0e0a8" opacity="1"/>
<ellipse cx="293.1" cy="91.8" rx="1.2" ry="0.9" fill="#b0d898" opacity="1"/>
<ellipse cx="163.3" cy="79.7" rx="2.1" ry="1.5" fill="#b0d898" opacity="1"/>
<ellipse cx="213.8" cy="86.0" rx="1.1" ry="0.8" fill="#b0d898" opacity="1"/>
<ellipse cx="145.4" cy="91.5" rx="1.9" ry="1.4" fill="#c0e0a8" opacity="1"/>
<ellipse cx="168.4" cy="84.8" rx="1.3" ry="1.0" fill="#c0e0a8" opacity="1"/>
<ellipse cx="136.1" cy="91.7" rx="1.4" ry="1.0" fill="#c0e0a8" opacity="1"/>
<ellipse cx="169.0" cy="87.6" rx="1.9" ry="1.3" fill="#b0d898" opacity="1"/>
</g>
<g filter="url(#b05)">
<ellipse cx="229" cy="81" rx="4" ry="6" fill="#c08a28"/>
<ellipse cx="232" cy="77" rx="4" ry="3.5" fill="#5a8a38"/>
<ellipse cx="253" cy="72" rx="7" ry="5" fill="#6aa040"/>
<ellipse cx="254" cy="69" rx="3" ry="2" fill="#f0f4e8"/>
<ellipse cx="272" cy="68" rx="5" ry="3" fill="#e8d030"/>
<ellipse cx="258" cy="93" rx="6" ry="3" fill="#e8d030"/>
<ellipse cx="340" cy="63" rx="4" ry="3" fill="#8a6020"/>
<ellipse cx="355" cy="82" rx="4" ry="3" fill="#6a5020"/>
<path d="M253,76 L251,95" stroke="#4a8a30" stroke-width="1.8"/>
<path d="M235,84 L237,95" stroke="#4a8a30" stroke-width="1.5"/>
<path d="M215,70 Q220,85 218,95" stroke="#4a8a30" stroke-width="1.5" fill="none"/>
</g>
<g fill="none" stroke="#5c9038" filter="url(#b05)">
<path d="M288,0 Q298,40 316,95" stroke-width="1.8"/>
<path d="M345,0 Q352,50 360,95" stroke-width="1.5"/>
<path d="M372,10 Q386,50 402,95" stroke-width="1.5"/>
<path d="M318,50 Q328,75 345,95" stroke-width="1.3"/>
</g>

<linearGradient id="hz2" x1="0" y1="0" x2="1" y2="0"><stop offset="0" stop-color="#f4f8e8" stop-opacity="0"/><stop offset=".35" stop-color="#f4f8e8" stop-opacity="0"/><stop offset=".55" stop-color="#f4f8e8" stop-opacity=".35"/><stop offset=".7" stop-color="#f4f8e8" stop-opacity=".5"/></linearGradient>
<rect x="127" y="42" width="421" height="53" fill="url(#hz2)"/>
<rect x="127" y="0" width="421" height="95" fill="url(#hz)"/>
<g filter="url(#b05)" opacity=".92">
<g transform="translate(341,28) scale(1.0,1.0)" opacity="1.0">
<path d="M0,0 Q9.3,-4.4 20.6,-1.1 L19.2,0 L20.6,1.1 Q9.3,4.4 0,0Z" fill="#f2dc28" transform="rotate(7.0)"/>
<path d="M0,0 Q8.7,-4.5 19.3,-1.1 L17.9,0 L19.3,1.1 Q8.7,4.5 0,0Z" fill="#f2dc28" transform="rotate(35.6)"/>
<path d="M0,0 Q8.3,-4.3 18.5,-1.1 L17.2,0 L18.5,1.1 Q8.3,4.3 0,0Z" fill="#f2dc28" transform="rotate(74.0)"/>
<path d="M0,0 Q9.0,-4.2 19.9,-1.1 L18.5,0 L19.9,1.1 Q9.0,4.2 0,0Z" fill="#f2dc28" transform="rotate(102.0)"/>
<path d="M0,0 Q9.4,-4.6 20.9,-1.2 L19.4,0 L20.9,1.2 Q9.4,4.6 0,0Z" fill="#f2dc28" transform="rotate(127.4)"/>
<path d="M0,0 Q8.7,-4.5 19.3,-1.1 L17.9,0 L19.3,1.1 Q8.7,4.5 0,0Z" fill="#f2dc28" transform="rotate(161.5)"/>
<path d="M0,0 Q8.6,-4.1 19.2,-1.0 L17.8,0 L19.2,1.0 Q8.6,4.1 0,0Z" fill="#f2dc28" transform="rotate(194.6)"/>
<path d="M0,0 Q8.7,-4.6 19.3,-1.1 L18.0,0 L19.3,1.1 Q8.7,4.6 0,0Z" fill="#f2dc28" transform="rotate(223.8)"/>
<path d="M0,0 Q8.8,-3.9 19.5,-1.0 L18.2,0 L19.5,1.0 Q8.8,3.9 0,0Z" fill="#f2dc28" transform="rotate(252.8)"/>
<path d="M0,0 Q8.5,-4.4 18.8,-1.1 L17.5,0 L18.8,1.1 Q8.5,4.4 0,0Z" fill="#f2dc28" transform="rotate(283.6)"/>
<path d="M0,0 Q9.1,-4.2 20.3,-1.1 L18.9,0 L20.3,1.1 Q9.1,4.2 0,0Z" fill="#f2dc28" transform="rotate(307.7)"/>
<path d="M0,0 Q8.6,-4.5 19.2,-1.1 L17.8,0 L19.2,1.1 Q8.6,4.5 0,0Z" fill="#f2dc28" transform="rotate(338.0)"/>
<polygon points="4.1,0.7 1.9,1.0 2.9,3.0 0.9,1.9 0.6,4.2 -0.4,2.1 -2.0,3.7 -1.5,1.5 -3.8,1.8 -2.1,0.3 -4.1,-0.7 -1.9,-1.0 -2.9,-3.0 -0.9,-1.9 -0.6,-4.2 0.4,-2.1 2.0,-3.7 1.5,-1.5 3.8,-1.8 2.1,-0.3" fill="#8a9a40"/>
<circle r="2.9" fill="#8a9a40"/>
</g>
</g>
<g filter="url(#b05)">
<path d="M197,75 Q199,86 199,95" stroke="#5a9a30" stroke-width="2.2" fill="none"/>
<g transform="translate(194,66) scale(1,1)" opacity="1.0">
<path d="M0,0 Q13.1,-8.7 24.9,-7.0 L28.4,-4.2 L26.1,-1.7 L29.0,0.7 L26.7,3.1 L27.5,6.3 Q13.1,8.7 0,0Z" fill="#f8e41c" transform="rotate(-8.0)"/>
<path d="M0,0 Q12.2,-8.1 23.2,-6.5 L26.5,-3.9 L24.3,-1.6 L27.0,0.6 L24.8,2.9 L25.6,5.8 Q12.2,8.1 0,0Z" fill="#f8e41c" transform="rotate(28.0)"/>
<path d="M0,0 Q10.3,-6.9 19.8,-5.5 L22.5,-3.3 L20.7,-1.4 L23.0,0.6 L21.2,2.5 L21.8,5.0 Q10.3,6.9 0,0Z" fill="#f8e41c" transform="rotate(64.0)"/>
<path d="M0,0 Q9.9,-6.6 18.9,-5.3 L21.6,-3.2 L19.8,-1.3 L22.0,0.5 L20.2,2.4 L20.9,4.8 Q9.9,6.6 0,0Z" fill="#f8e41c" transform="rotate(100.0)"/>
<path d="M0,0 Q10.8,-7.2 20.6,-5.8 L23.5,-3.5 L21.6,-1.4 L24.0,0.6 L22.1,2.6 L22.8,5.2 Q10.8,7.2 0,0Z" fill="#f8e41c" transform="rotate(136.0)"/>
<path d="M0,0 Q11.7,-7.8 22.4,-6.2 L25.5,-3.7 L23.4,-1.6 L26.0,0.6 L23.9,2.8 L24.7,5.6 Q11.7,7.8 0,0Z" fill="#f8e41c" transform="rotate(172.0)"/>
<path d="M0,0 Q13.5,-9.0 25.8,-7.2 L29.4,-4.3 L27.0,-1.8 L30.0,0.7 L27.6,3.2 L28.5,6.5 Q13.5,9.0 0,0Z" fill="#f8e41c" transform="rotate(208.0)"/>
<path d="M0,0 Q14.0,-9.3 26.7,-7.4 L30.4,-4.5 L27.9,-1.9 L31.0,0.7 L28.5,3.3 L29.4,6.7 Q14.0,9.3 0,0Z" fill="#f8e41c" transform="rotate(244.0)"/>
<path d="M0,0 Q13.5,-9.0 25.8,-7.2 L29.4,-4.3 L27.0,-1.8 L30.0,0.7 L27.6,3.2 L28.5,6.5 Q13.5,9.0 0,0Z" fill="#f8e41c" transform="rotate(280.0)"/>
<path d="M0,0 Q13.1,-8.7 24.9,-7.0 L28.4,-4.2 L26.1,-1.7 L29.0,0.7 L26.7,3.1 L27.5,6.3 Q13.1,8.7 0,0Z" fill="#f8e41c" transform="rotate(316.0)"/>
<polygon points="14.9,-2.1 4.4,1.1 12.0,9.0 2.3,3.9 2.1,14.9 -1.1,4.4 -9.0,12.0 -3.9,2.3 -14.9,2.1 -4.4,-1.1 -12.0,-9.0 -2.3,-3.9 -2.1,-14.9 1.1,-4.4 9.0,-12.0 3.9,-2.3" fill="#3c5c1c"/>
</g>
</g>
</svg>
<svg class="abs" style="left:127px;top:538px" width="821" height="51" viewBox="127 538 821 51">
<defs>
<linearGradient id="fv" x1="0" y1="0" x2="0" y2="1"><stop offset="0" stop-color="#fff"/><stop offset=".06" stop-color="#f2f2f2"/><stop offset=".25" stop-color="#c0c4be"/><stop offset=".45" stop-color="#8a9288"/><stop offset=".65" stop-color="#555f52"/><stop offset="1" stop-color="#363e33"/></linearGradient>
<linearGradient id="fr" x1="0" y1="0" x2="0" y2="1"><stop offset="0" stop-color="#fff"/><stop offset=".15" stop-color="#f6f6f4"/><stop offset=".45" stop-color="#cdd4c8"/><stop offset=".72" stop-color="#a6ba8a"/><stop offset="1" stop-color="#8eaa6a"/></linearGradient>
<linearGradient id="fm" x1="0" y1="0" x2="1" y2="0"><stop offset="0" stop-color="#fff" stop-opacity="0"/><stop offset=".3" stop-color="#fff" stop-opacity="0"/><stop offset=".5" stop-color="#fff" stop-opacity="1"/></linearGradient>
<linearGradient id="ftop" x1="0" y1="0" x2="0" y2="1"><stop offset="0" stop-color="#fff" stop-opacity="1"/><stop offset=".06" stop-color="#fff" stop-opacity=".9"/><stop offset=".3" stop-color="#fff" stop-opacity=".25"/><stop offset=".55" stop-color="#fff" stop-opacity="0"/></linearGradient>
<mask id="mr"><rect x="127" y="538" width="821" height="51" fill="url(#fm)"/></mask>
</defs>
<rect x="127" y="538" width="821" height="51" fill="url(#fv)"/>
<g filter="url(#b2)">
<rect x="163" y="550" width="10" height="40" fill="#8a9488" opacity=".6"/>
<rect x="246" y="552" width="8" height="40" fill="#8a9488" opacity=".5"/>
<rect x="430" y="545" width="12" height="45" fill="#a8b0a4" opacity=".5"/>
<ellipse cx="300" cy="560" rx="30" ry="8" fill="#7a8a78" opacity=".4"/>
</g>
<rect x="127" y="538" width="821" height="51" fill="url(#fr)" mask="url(#mr)"/>
<g filter="url(#b2)">
<ellipse cx="470" cy="585" rx="90" ry="9" fill="#98a848" opacity=".8"/>
<ellipse cx="700" cy="584" rx="150" ry="9" fill="#a8b860" opacity=".45"/>
</g>
<g filter="url(#b1)">
<ellipse cx="474.4" cy="576.6" rx="3.0" ry="2.1" fill="#d8b830" opacity="1"/>
<ellipse cx="541.2" cy="577.5" rx="2.4" ry="1.7" fill="#c8a828" opacity="1"/>
<ellipse cx="495.2" cy="576.3" rx="3.9" ry="2.8" fill="#d8b830" opacity="1"/>
<ellipse cx="545.1" cy="576.0" rx="3.7" ry="2.7" fill="#c8a828" opacity="1"/>
<ellipse cx="487.9" cy="579.0" rx="2.5" ry="1.8" fill="#c0a020" opacity="1"/>
<ellipse cx="395.7" cy="579.0" rx="3.4" ry="2.5" fill="#c8a828" opacity="1"/>
<ellipse cx="412.3" cy="585.3" rx="2.0" ry="1.4" fill="#c8a828" opacity="1"/>
<ellipse cx="557.8" cy="575.5" rx="2.9" ry="2.0" fill="#c0a020" opacity="1"/>
<ellipse cx="449.2" cy="588.0" rx="2.9" ry="2.1" fill="#c8a828" opacity="1"/>
<ellipse cx="391.5" cy="585.9" rx="3.7" ry="2.7" fill="#d8b830" opacity="1"/>
<ellipse cx="498.5" cy="586.0" rx="3.0" ry="2.1" fill="#c0a020" opacity="1"/>
<ellipse cx="528.9" cy="583.9" rx="3.9" ry="2.8" fill="#c0a020" opacity="1"/>
<ellipse cx="551.3" cy="577.4" rx="3.5" ry="2.5" fill="#c8a828" opacity="1"/>
<ellipse cx="400.2" cy="581.1" rx="3.3" ry="2.3" fill="#c0a020" opacity="1"/>
<ellipse cx="519.1" cy="586.0" rx="3.5" ry="2.5" fill="#c8a828" opacity="1"/>
<ellipse cx="426.7" cy="582.6" rx="3.6" ry="2.6" fill="#c0a020" opacity="1"/>
<ellipse cx="469.8" cy="575.5" rx="3.1" ry="2.2" fill="#c0a020" opacity="1"/>
<ellipse cx="389.5" cy="581.3" rx="3.7" ry="2.6" fill="#d8b830" opacity="1"/>
<ellipse cx="407.3" cy="575.2" rx="2.9" ry="2.1" fill="#d8b830" opacity="1"/>
<ellipse cx="470.7" cy="585.1" rx="3.6" ry="2.6" fill="#c8a828" opacity="1"/>
<ellipse cx="393.1" cy="587.7" rx="3.1" ry="2.2" fill="#c0a020" opacity="1"/>
<ellipse cx="484.3" cy="585.1" rx="3.2" ry="2.3" fill="#c8a828" opacity="1"/>
<ellipse cx="436.0" cy="575.6" rx="2.6" ry="1.8" fill="#c0a020" opacity="1"/>
<ellipse cx="512.9" cy="585.9" rx="3.5" ry="2.5" fill="#d8b830" opacity="1"/>
<ellipse cx="395.9" cy="586.5" rx="2.3" ry="1.6" fill="#d8b830" opacity="1"/>
<ellipse cx="424.7" cy="582.0" rx="3.3" ry="2.3" fill="#c0a020" opacity="1"/>
<ellipse cx="521.6" cy="575.9" rx="2.8" ry="2.0" fill="#d8b830" opacity="1"/>
<ellipse cx="505.8" cy="584.9" rx="3.8" ry="2.7" fill="#c8a828" opacity="1"/>
<ellipse cx="468.1" cy="585.7" rx="3.9" ry="2.8" fill="#c8a828" opacity="1"/>
<ellipse cx="514.0" cy="582.3" rx="3.9" ry="2.8" fill="#c8a828" opacity="1"/>
<ellipse cx="423.3" cy="587.5" rx="2.2" ry="1.6" fill="#d8b830" opacity="1"/>
<ellipse cx="480.1" cy="581.6" rx="3.8" ry="2.7" fill="#c8a828" opacity="1"/>
<ellipse cx="502.4" cy="585.0" rx="3.9" ry="2.8" fill="#c0a020" opacity="1"/>
<ellipse cx="421.4" cy="578.5" rx="3.0" ry="2.2" fill="#c8a828" opacity="1"/>
<ellipse cx="455.3" cy="576.2" rx="2.4" ry="1.7" fill="#d8b830" opacity="1"/>
<ellipse cx="440.7" cy="588.7" rx="3.2" ry="2.3" fill="#c8a828" opacity="1"/>
<ellipse cx="408.9" cy="583.2" rx="3.9" ry="2.8" fill="#c0a020" opacity="1"/>
<ellipse cx="441.8" cy="584.7" rx="3.7" ry="2.6" fill="#c0a020" opacity="1"/>
<ellipse cx="546.3" cy="577.5" rx="3.6" ry="2.6" fill="#c8a828" opacity="1"/>
<ellipse cx="448.6" cy="585.9" rx="2.4" ry="1.7" fill="#d8b830" opacity="1"/>
<ellipse cx="424.4" cy="586.1" rx="3.5" ry="2.5" fill="#d8b830" opacity="1"/>
<ellipse cx="416.7" cy="578.0" rx="2.9" ry="2.1" fill="#d8b830" opacity="1"/>
<ellipse cx="465.1" cy="581.9" rx="3.2" ry="2.3" fill="#c8a828" opacity="1"/>
<ellipse cx="535.3" cy="577.9" rx="2.7" ry="1.9" fill="#c8a828" opacity="1"/>
<ellipse cx="388.5" cy="578.9" rx="3.8" ry="2.7" fill="#c0a020" opacity="1"/>
<ellipse cx="383.3" cy="577.5" rx="2.5" ry="1.8" fill="#d8b830" opacity="1"/>
<ellipse cx="482.1" cy="584.1" rx="2.4" ry="1.7" fill="#c8a828" opacity="1"/>
<ellipse cx="445.0" cy="577.1" rx="3.8" ry="2.7" fill="#d8b830" opacity="1"/>
<ellipse cx="404.7" cy="578.4" rx="3.6" ry="2.6" fill="#c8a828" opacity="1"/>
<ellipse cx="383.7" cy="579.5" rx="2.7" ry="1.9" fill="#c8a828" opacity="1"/>
<ellipse cx="533.8" cy="580.3" rx="2.5" ry="1.8" fill="#c0a020" opacity="1"/>
<ellipse cx="500.5" cy="579.2" rx="3.2" ry="2.3" fill="#d8b830" opacity="1"/>
<ellipse cx="387.3" cy="577.1" rx="3.1" ry="2.2" fill="#c8a828" opacity="1"/>
<ellipse cx="417.5" cy="580.7" rx="2.9" ry="2.1" fill="#c0a020" opacity="1"/>
<ellipse cx="404.5" cy="584.9" rx="2.5" ry="1.8" fill="#c0a020" opacity="1"/>
<ellipse cx="735.3" cy="574.7" rx="3.9" ry="2.8" fill="#c8b030" opacity="1"/>
<ellipse cx="767.6" cy="576.3" rx="2.1" ry="1.5" fill="#e0d040" opacity="1"/>
<ellipse cx="896.0" cy="571.2" rx="2.5" ry="1.8" fill="#c8b030" opacity="1"/>
<ellipse cx="797.2" cy="569.2" rx="3.8" ry="2.7" fill="#e0d040" opacity="1"/>
<ellipse cx="804.6" cy="579.0" rx="3.7" ry="2.7" fill="#e0d040" opacity="1"/>
<ellipse cx="675.7" cy="581.4" rx="4.0" ry="2.9" fill="#d8c030" opacity="1"/>
<ellipse cx="776.6" cy="574.1" rx="2.1" ry="1.5" fill="#c8b030" opacity="1"/>
<ellipse cx="651.0" cy="580.5" rx="2.0" ry="1.5" fill="#c8b030" opacity="1"/>
<ellipse cx="606.5" cy="577.3" rx="3.0" ry="2.1" fill="#c8b030" opacity="1"/>
<ellipse cx="670.4" cy="582.2" rx="2.3" ry="1.7" fill="#c8b030" opacity="1"/>
<ellipse cx="638.3" cy="583.7" rx="2.7" ry="1.9" fill="#e0d040" opacity="1"/>
<ellipse cx="653.0" cy="568.1" rx="2.6" ry="1.9" fill="#c8b030" opacity="1"/>
<ellipse cx="872.0" cy="577.0" rx="2.4" ry="1.7" fill="#e0d040" opacity="1"/>
<ellipse cx="679.7" cy="587.0" rx="4.0" ry="2.8" fill="#d8c030" opacity="1"/>
<ellipse cx="701.3" cy="567.4" rx="2.8" ry="2.0" fill="#d8c030" opacity="1"/>
<ellipse cx="706.3" cy="585.5" rx="2.5" ry="1.8" fill="#e0d040" opacity="1"/>
<ellipse cx="686.3" cy="571.8" rx="1.9" ry="1.3" fill="#c8b030" opacity="1"/>
<ellipse cx="685.5" cy="574.6" rx="2.5" ry="1.8" fill="#e0d040" opacity="1"/>
<ellipse cx="904.2" cy="580.8" rx="2.7" ry="2.0" fill="#c8b030" opacity="1"/>
<ellipse cx="930.4" cy="574.3" rx="3.2" ry="2.3" fill="#d8c030" opacity="1"/>
<ellipse cx="859.3" cy="580.4" rx="3.3" ry="2.4" fill="#c8b030" opacity="1"/>
<ellipse cx="797.8" cy="567.5" rx="2.0" ry="1.4" fill="#c8b030" opacity="1"/>
<ellipse cx="901.3" cy="574.8" rx="4.0" ry="2.8" fill="#d8c030" opacity="1"/>
<ellipse cx="871.9" cy="581.7" rx="2.5" ry="1.8" fill="#c8b030" opacity="1"/>
<ellipse cx="699.8" cy="588.5" rx="2.2" ry="1.6" fill="#d8c030" opacity="1"/>
<ellipse cx="664.7" cy="571.9" rx="2.3" ry="1.7" fill="#e0d040" opacity="1"/>
<ellipse cx="560.4" cy="578.5" rx="2.8" ry="2.0" fill="#d8c030" opacity="1"/>
<ellipse cx="772.2" cy="585.5" rx="3.6" ry="2.6" fill="#d8c030" opacity="1"/>
<ellipse cx="802.3" cy="578.9" rx="3.8" ry="2.7" fill="#c8b030" opacity="1"/>
<ellipse cx="662.5" cy="568.4" rx="1.9" ry="1.3" fill="#e0d040" opacity="1"/>
<ellipse cx="640.7" cy="575.1" rx="2.2" ry="1.6" fill="#d8c030" opacity="1"/>
<ellipse cx="879.9" cy="569.7" rx="3.3" ry="2.4" fill="#c8b030" opacity="1"/>
<ellipse cx="872.3" cy="572.8" rx="2.8" ry="2.0" fill="#c8b030" opacity="1"/>
<ellipse cx="850.6" cy="578.3" rx="2.4" ry="1.7" fill="#d8c030" opacity="1"/>
<ellipse cx="700.5" cy="582.2" rx="4.0" ry="2.9" fill="#e0d040" opacity="1"/>
<ellipse cx="608.9" cy="567.5" rx="2.0" ry="1.4" fill="#d8c030" opacity="1"/>
<ellipse cx="903.6" cy="573.1" rx="3.8" ry="2.7" fill="#e0d040" opacity="1"/>
<ellipse cx="859.6" cy="577.1" rx="2.2" ry="1.6" fill="#c8b030" opacity="1"/>
<ellipse cx="897.5" cy="567.2" rx="2.4" ry="1.7" fill="#e0d040" opacity="1"/>
<ellipse cx="846.9" cy="582.0" rx="2.4" ry="1.7" fill="#e0d040" opacity="1"/>
<ellipse cx="657.7" cy="582.5" rx="2.6" ry="1.9" fill="#c8b030" opacity="1"/>
<ellipse cx="892.1" cy="570.7" rx="3.2" ry="2.3" fill="#d8c030" opacity="1"/>
<ellipse cx="780.2" cy="575.7" rx="3.5" ry="2.5" fill="#e0d040" opacity="1"/>
<ellipse cx="847.2" cy="572.2" rx="2.2" ry="1.6" fill="#d8c030" opacity="1"/>
<ellipse cx="706.3" cy="581.4" rx="2.4" ry="1.7" fill="#d8c030" opacity="1"/>
<ellipse cx="937.8" cy="576.9" rx="3.5" ry="2.5" fill="#d8c030" opacity="1"/>
<ellipse cx="664.0" cy="572.2" rx="2.4" ry="1.7" fill="#e0d040" opacity="1"/>
<ellipse cx="713.9" cy="587.5" rx="4.2" ry="3.0" fill="#d8c030" opacity="1"/>
<ellipse cx="621.0" cy="588.9" rx="3.9" ry="2.8" fill="#d8c030" opacity="1"/>
<ellipse cx="671.0" cy="582.8" rx="4.2" ry="3.0" fill="#d8c030" opacity="1"/>
<ellipse cx="717.0" cy="586.8" rx="3.8" ry="2.7" fill="#c8b030" opacity="1"/>
<ellipse cx="626.4" cy="567.5" rx="2.9" ry="2.0" fill="#e0d040" opacity="1"/>
<ellipse cx="670.1" cy="575.0" rx="3.3" ry="2.4" fill="#d8c030" opacity="1"/>
<ellipse cx="940.6" cy="575.0" rx="3.5" ry="2.5" fill="#e0d040" opacity="1"/>
<ellipse cx="669.7" cy="585.9" rx="2.9" ry="2.1" fill="#d8c030" opacity="1"/>
<ellipse cx="775.8" cy="586.6" rx="3.9" ry="2.8" fill="#c8b030" opacity="1"/>
<ellipse cx="606.7" cy="573.4" rx="1.9" ry="1.3" fill="#e0d040" opacity="1"/>
<ellipse cx="780.7" cy="572.3" rx="2.8" ry="2.0" fill="#c8b030" opacity="1"/>
<ellipse cx="648.3" cy="577.1" rx="2.7" ry="1.9" fill="#c8b030" opacity="1"/>
<ellipse cx="776.9" cy="569.5" rx="1.8" ry="1.3" fill="#c8b030" opacity="1"/>
<ellipse cx="820.1" cy="566.1" rx="2.6" ry="1.9" fill="#d8c030" opacity="1"/>
<ellipse cx="946.9" cy="570.7" rx="3.9" ry="2.8" fill="#c8b030" opacity="1"/>
<ellipse cx="572.5" cy="574.1" rx="3.2" ry="2.3" fill="#e0d040" opacity="1"/>
<ellipse cx="582.4" cy="578.7" rx="3.4" ry="2.4" fill="#e0d040" opacity="1"/>
<ellipse cx="657.9" cy="570.3" rx="2.5" ry="1.8" fill="#d8c030" opacity="1"/>
<ellipse cx="945.8" cy="576.2" rx="3.8" ry="2.7" fill="#e0d040" opacity="1"/>
<ellipse cx="578.2" cy="585.7" rx="4.1" ry="2.9" fill="#e0d040" opacity="1"/>
<ellipse cx="606.1" cy="567.7" rx="2.7" ry="1.9" fill="#e0d040" opacity="1"/>
<ellipse cx="680.3" cy="577.8" rx="1.8" ry="1.3" fill="#d8c030" opacity="1"/>
<ellipse cx="584.7" cy="574.4" rx="3.6" ry="2.6" fill="#c8b030" opacity="1"/>
<ellipse cx="916.1" cy="584.0" rx="3.0" ry="2.1" fill="#e8ece4" opacity="1"/>
<ellipse cx="831.7" cy="577.8" rx="2.8" ry="2.0" fill="#f0f0f0" opacity="1"/>
<ellipse cx="937.3" cy="576.6" rx="3.1" ry="2.2" fill="#e8ece4" opacity="1"/>
<ellipse cx="822.1" cy="586.8" rx="1.9" ry="1.3" fill="#f0f0f0" opacity="1"/>
<ellipse cx="818.2" cy="574.3" rx="2.4" ry="1.7" fill="#e8ece4" opacity="1"/>
<ellipse cx="916.2" cy="573.8" rx="2.8" ry="2.0" fill="#e8ece4" opacity="1"/>
<ellipse cx="832.4" cy="566.6" rx="2.8" ry="2.0" fill="#f0f0f0" opacity="1"/>
</g>
<g fill="none" stroke="#4a7a30" filter="url(#b05)">
<path d="M483,545 Q488,570 495,589" stroke-width="1.8"/>
<path d="M578,572 Q583,580 586,589" stroke-width="1.8"/>
<path d="M590,574 Q600,582 606,589" stroke-width="1.8"/>
</g>
<rect x="127" y="538" width="821" height="51" fill="url(#ftop)"/>
<g filter="url(#b1)" opacity=".7">
<g transform="translate(578,562) scale(1.0,1.0)" opacity="1.0">
<path d="M0,0 Q15.5,-10.0 34.4,-2.5 L32.0,0 L34.4,2.5 Q15.5,10.0 0,0Z" fill="#f0e890" transform="rotate(-2.4)"/>
<path d="M0,0 Q15.3,-10.2 34.0,-2.6 L31.7,0 L34.0,2.6 Q15.3,10.2 0,0Z" fill="#f0e890" transform="rotate(19.5)"/>
<path d="M0,0 Q15.8,-9.9 35.0,-2.5 L32.6,0 L35.0,2.5 Q15.8,9.9 0,0Z" fill="#f0e890" transform="rotate(45.1)"/>
<path d="M0,0 Q15.4,-9.6 34.3,-2.4 L31.9,0 L34.3,2.4 Q15.4,9.6 0,0Z" fill="#f0e890" transform="rotate(70.7)"/>
<path d="M0,0 Q15.2,-9.8 33.7,-2.4 L31.3,0 L33.7,2.4 Q15.2,9.8 0,0Z" fill="#f0e890" transform="rotate(95.0)"/>
<path d="M0,0 Q16.8,-11.2 37.3,-2.8 L34.7,0 L37.3,2.8 Q16.8,11.2 0,0Z" fill="#f0e890" transform="rotate(124.5)"/>
<path d="M0,0 Q15.4,-9.7 34.2,-2.4 L31.8,0 L34.2,2.4 Q15.4,9.7 0,0Z" fill="#f0e890" transform="rotate(139.2)"/>
<path d="M0,0 Q16.2,-10.3 36.1,-2.6 L33.6,0 L36.1,2.6 Q16.2,10.3 0,0Z" fill="#f0e890" transform="rotate(168.9)"/>
<path d="M0,0 Q17.0,-10.6 37.7,-2.7 L35.1,0 L37.7,2.7 Q17.0,10.6 0,0Z" fill="#f0e890" transform="rotate(191.7)"/>
<path d="M0,0 Q16.9,-11.3 37.5,-2.8 L34.9,0 L37.5,2.8 Q16.9,11.3 0,0Z" fill="#f0e890" transform="rotate(218.8)"/>
<path d="M0,0 Q15.8,-11.5 35.2,-2.9 L32.8,0 L35.2,2.9 Q15.8,11.5 0,0Z" fill="#f0e890" transform="rotate(235.7)"/>
<path d="M0,0 Q16.6,-10.7 37.0,-2.7 L34.4,0 L37.0,2.7 Q16.6,10.7 0,0Z" fill="#f0e890" transform="rotate(267.8)"/>
<path d="M0,0 Q16.5,-11.0 36.8,-2.7 L34.2,0 L36.8,2.7 Q16.5,11.0 0,0Z" fill="#f0e890" transform="rotate(283.1)"/>
<path d="M0,0 Q15.2,-10.9 33.7,-2.7 L31.3,0 L33.7,2.7 Q15.2,10.9 0,0Z" fill="#f0e890" transform="rotate(316.1)"/>
<path d="M0,0 Q15.9,-11.1 35.4,-2.8 L33.0,0 L35.4,2.8 Q15.9,11.1 0,0Z" fill="#f0e890" transform="rotate(334.4)"/>
<polygon points="9.5,0.0 3.6,1.2 7.7,5.6 2.2,3.1 2.9,9.0 0.0,3.8 -2.9,9.0 -2.2,3.1 -7.7,5.6 -3.6,1.2 -9.5,0.0 -3.6,-1.2 -7.7,-5.6 -2.2,-3.1 -2.9,-9.0 -0.0,-3.8 2.9,-9.0 2.2,-3.1 7.7,-5.6 3.6,-1.2" fill="#7a9050"/>
<circle r="5.3" fill="#7a9050"/>
</g>
</g>
<g filter="url(#b05)">
<g transform="translate(269,597) scale(1.1,0.75)" opacity="1.0">
<path d="M0,0 Q21.5,-10.4 47.8,-2.6 L44.5,0 L47.8,2.6 Q21.5,10.4 0,0Z" fill="#f6de1a" transform="rotate(-90.8)"/>
<path d="M0,0 Q20.9,-10.1 46.5,-2.5 L43.2,0 L46.5,2.5 Q20.9,10.1 0,0Z" fill="#f6de1a" transform="rotate(-72.6)"/>
<path d="M0,0 Q20.2,-10.2 44.9,-2.6 L41.8,0 L44.9,2.6 Q20.2,10.2 0,0Z" fill="#f6de1a" transform="rotate(-48.3)"/>
<path d="M0,0 Q20.0,-9.7 44.4,-2.4 L41.3,0 L44.4,2.4 Q20.0,9.7 0,0Z" fill="#f6de1a" transform="rotate(-26.5)"/>
<path d="M0,0 Q21.4,-9.7 47.5,-2.4 L44.2,0 L47.5,2.4 Q21.4,9.7 0,0Z" fill="#f6de1a" transform="rotate(-9.9)"/>
<path d="M0,0 Q19.7,-8.7 43.9,-2.2 L40.8,0 L43.9,2.2 Q19.7,8.7 0,0Z" fill="#f6de1a" transform="rotate(15.4)"/>
<path d="M0,0 Q19.8,-9.7 44.1,-2.4 L41.0,0 L44.1,2.4 Q19.8,9.7 0,0Z" fill="#f6de1a" transform="rotate(32.6)"/>
<path d="M0,0 Q19.7,-9.8 43.7,-2.5 L40.7,0 L43.7,2.5 Q19.7,9.8 0,0Z" fill="#f6de1a" transform="rotate(56.5)"/>
<path d="M0,0 Q20.2,-9.7 44.9,-2.4 L41.8,0 L44.9,2.4 Q20.2,9.7 0,0Z" fill="#f6de1a" transform="rotate(76.3)"/>
<path d="M0,0 Q21.5,-10.1 47.8,-2.5 L44.5,0 L47.8,2.5 Q21.5,10.1 0,0Z" fill="#f6de1a" transform="rotate(96.1)"/>
<path d="M0,0 Q19.3,-9.0 42.9,-2.2 L39.9,0 L42.9,2.2 Q19.3,9.0 0,0Z" fill="#f6de1a" transform="rotate(125.7)"/>
<path d="M0,0 Q21.1,-8.9 46.8,-2.2 L43.5,0 L46.8,2.2 Q21.1,8.9 0,0Z" fill="#f6de1a" transform="rotate(147.2)"/>
<path d="M0,0 Q19.3,-9.1 42.8,-2.3 L39.8,0 L42.8,2.3 Q19.3,9.1 0,0Z" fill="#f6de1a" transform="rotate(160.3)"/>
<path d="M0,0 Q19.5,-8.7 43.3,-2.2 L40.3,0 L43.3,2.2 Q19.5,8.7 0,0Z" fill="#f6de1a" transform="rotate(182.9)"/>
<path d="M0,0 Q20.3,-9.3 45.2,-2.3 L42.1,0 L45.2,2.3 Q20.3,9.3 0,0Z" fill="#f6de1a" transform="rotate(204.9)"/>
<path d="M0,0 Q19.0,-9.5 42.3,-2.4 L39.4,0 L42.3,2.4 Q19.0,9.5 0,0Z" fill="#f6de1a" transform="rotate(224.7)"/>
<path d="M0,0 Q21.5,-9.1 47.8,-2.3 L44.4,0 L47.8,2.3 Q21.5,9.1 0,0Z" fill="#f6de1a" transform="rotate(248.7)"/>
<polygon points="0.0,-14.4 1.5,-4.6 8.5,-11.6 3.9,-2.8 13.7,-4.4 4.8,0.0 13.7,4.4 3.9,2.8 8.5,11.6 1.5,4.6 0.0,14.4 -1.5,4.6 -8.5,11.6 -3.9,2.8 -13.7,4.4 -4.8,0.0 -13.7,-4.4 -3.9,-2.8 -8.5,-11.6 -1.5,-4.6" fill="#3a6a1c"/>
<circle r="6.7" fill="#3a6a1c"/>
</g>
</g>
</svg>
<svg class="abs" style="left:290px;top:8px" width="260" height="80" viewBox="290 8 260 80">
<g font-family="Liberation Serif" font-weight="bold" font-size="22" fill="#fff" stroke="#fff" stroke-width="4" stroke-linejoin="round" opacity=".95">
<text transform="translate(304.0,42) scale(0.91,1.1)">全</text>
<text transform="translate(329.9,42) scale(0.91,1.1)">国</text>
<text transform="translate(355.8,42) scale(0.91,1.1)">园</text>
<text transform="translate(381.7,42) scale(0.91,1.1)">林</text>
<text transform="translate(407.6,42) scale(0.91,1.1)">植</text>
<text transform="translate(433.5,42) scale(0.91,1.1)">物</text>
<text transform="translate(459.4,42) scale(0.91,1.1)">区</text>
<text transform="translate(485.3,42) scale(0.91,1.1)">划</text>
<text transform="translate(427.0,73) scale(0.91,1.1)">信</text>
<text transform="translate(453.6,73) scale(0.91,1.1)">息</text>
<text transform="translate(480.2,73) scale(0.91,1.1)">系</text>
<text transform="translate(506.8,73) scale(0.91,1.1)">统</text>
</g>
<g font-family="Liberation Serif" font-weight="bold" font-size="22" fill="#127812" stroke="#127812" stroke-width="0.3" stroke-linejoin="round">
<text transform="translate(304.0,42) scale(0.91,1.1)">全</text>
<text transform="translate(329.9,42) scale(0.91,1.1)">国</text>
<text transform="translate(355.8,42) scale(0.91,1.1)">园</text>
<text transform="translate(381.7,42) scale(0.91,1.1)">林</text>
<text transform="translate(407.6,42) scale(0.91,1.1)">植</text>
<text transform="translate(433.5,42) scale(0.91,1.1)">物</text>
<text transform="translate(459.4,42) scale(0.91,1.1)">区</text>
<text transform="translate(485.3,42) scale(0.91,1.1)">划</text>
<text transform="translate(427.0,73) scale(0.91,1.1)">信</text>
<text transform="translate(453.6,73) scale(0.91,1.1)">息</text>
<text transform="translate(480.2,73) scale(0.91,1.1)">系</text>
<text transform="translate(506.8,73) scale(0.91,1.1)">统</text>
</g></svg>
<div class="abs" style="left:810px;top:72px;white-space:nowrap;font-size:12px;line-height:14px"><b style="font-family:'Liberation Mono',monospace">admin</b> ,您好！ <a style="margin-left:6px">注销</a></div>
<div class="dots" style="left:127px;top:97px;width:821px"></div>
<div class="dots" style="left:127px;top:537px;width:821px"></div>
<!-- sidebar -->
<div class="lbl" style="top:106px">学名（拉丁名）：</div>
<div class="inp" style="top:121px"></div>
<div class="lbl" style="top:149px">种名：</div>
<div class="inp" style="top:164px"></div>
<div class="lbl" style="top:193px">科名：</div>
<div class="inp" style="top:207px"><span style="position:absolute;left:0;top:0;line-height:12px">百合科</span></div>
<div class="lbl" style="top:236px">属名：</div>
<div class="inp" style="top:250px"></div>
<div class="abs" style="left:141px;top:284px;width:10px;height:10px;border-radius:50%;border:1.5px solid;border-color:#606060 #dcd8d0 #dcd8d0 #606060;transform:rotate(-45deg) rotate(45deg);background:#fff"><div class="abs" style="left:1.5px;top:1.5px;width:4px;height:4px;border-radius:50%;background:#000"></div></div>
<div class="lbl" style="left:154px;top:284px">模糊查询</div>
<div class="abs" style="left:217px;top:284px;width:10px;height:10px;border-radius:50%;border:1.5px solid;border-color:#606060 #dcd8d0 #dcd8d0 #606060;background:#fff"></div>
<div class="lbl" style="left:230px;top:284px">精确查询</div>
<div class="abs" style="left:198px;top:301px;width:36px;height:19px;background:#d4d0c8;border:1px solid;border-color:#fff #404040 #404040 #fff;box-shadow:inset -1px -1px #808080;text-align:center;line-height:14px;font-size:12px;color:#111">查询</div>
<div class="lbl" style="top:321px;white-space:normal;width:150px;line-height:13px"><b>说明：</b>指定的各个条件间关系为逻辑与，未指定的条件不会参与查询。</div>
<!-- links -->
<div class="abs" style="left:360px;top:106px;line-height:14px"><a>添加树木</a></div>
<div class="abs" style="left:463px;top:106px;line-height:14px"><a>添加草花</a></div>
<!-- table -->
<div class="abs" style="left:354px;top:132px;width:588px;height:396px;border:1px solid;border-color:#dcd8d0 #808080 #808080 #dcd8d0;background:#fff"></div>
<div class="abs" style="left:355px;top:133px;width:586px;height:19px;background:#4f7dd0"></div>
<div class="hl" style="top:152px;background:#e6e3dc"></div>
<div class="th" style="left:355px;width:225px">学名</div>
<div class="th" style="left:580px;width:56px">科</div>
<div class="th" style="left:636px;width:92px">属</div>
<div class="th" style="left:728px;width:92px">种名</div>
<div class="th" style="left:820px;width:41px">类别</div>
<div class="th" style="left:861px;width:80px">详细信息</div>

<div class="row" style="top:152.50px;height:25.82px;background:#eef2fb"></div>
<div class="hl" style="top:178.32px"></div>
<div class="c sci" style="top:164.91px;left:357px">Smilax china</div>
<div class="c cn" style="top:164.91px;left:580px;width:56px">百合科</div>
<div class="c cn" style="top:164.91px;left:636px;width:92px">菝葜属</div>
<div class="c cn" style="top:164.91px;left:728px;width:92px">菝葜</div>
<div class="c cn" style="top:164.91px;left:820px;width:41px">草花</div>
<div class="c cn" style="top:164.91px;left:861px;width:80px"><a>点击查看</a></div>
<div class="row" style="top:179.32px;height:25.82px;background:#ffffff"></div>
<div class="hl" style="top:205.14px"></div>
<div class="c sci" style="top:191.73px;left:357px">Smilax china</div>
<div class="c cn" style="top:191.73px;left:580px;width:56px">百合科</div>
<div class="c cn" style="top:191.73px;left:636px;width:92px">菝葜属</div>
<div class="c cn" style="top:191.73px;left:728px;width:92px">菝葜</div>
<div class="c cn" style="top:191.73px;left:820px;width:41px">树木</div>
<div class="c cn" style="top:191.73px;left:861px;width:80px"><a>点击查看</a></div>
<div class="row" style="top:206.14px;height:25.82px;background:#eef2fb"></div>
<div class="hl" style="top:231.96px"></div>
<div class="c sci" style="top:218.55px;left:357px">Smilax megalantha</div>
<div class="c cn" style="top:218.55px;left:580px;width:56px">百合科</div>
<div class="c cn" style="top:218.55px;left:636px;width:92px">菝葜属</div>
<div class="c cn" style="top:218.55px;left:728px;width:92px">金姜豆藤</div>
<div class="c cn" style="top:218.55px;left:820px;width:41px">树木</div>
<div class="c cn" style="top:218.55px;left:861px;width:80px"><a>点击查看</a></div>
<div class="row" style="top:232.96px;height:25.82px;background:#ffffff"></div>
<div class="hl" style="top:258.78px"></div>
<div class="c sci" style="top:245.37px;left:357px">Smilax microphylla</div>
<div class="c cn" style="top:245.37px;left:580px;width:56px">百合科</div>
<div class="c cn" style="top:245.37px;left:636px;width:92px">菝葜属</div>
<div class="c cn" style="top:245.37px;left:728px;width:92px">地茯苓藤</div>
<div class="c cn" style="top:245.37px;left:820px;width:41px">树木</div>
<div class="c cn" style="top:245.37px;left:861px;width:80px"><a>点击查看</a></div>
<div class="row" style="top:259.78px;height:25.82px;background:#eef2fb"></div>
<div class="hl" style="top:285.60px"></div>
<div class="c sci" style="top:272.19px;left:357px">Reineckea carnea</div>
<div class="c cn" style="top:272.19px;left:580px;width:56px">百合科</div>
<div class="c cn" style="top:272.19px;left:636px;width:92px">吉祥草属</div>
<div class="c cn" style="top:272.19px;left:728px;width:92px">吉祥草</div>
<div class="c cn" style="top:272.19px;left:820px;width:41px">草花</div>
<div class="c cn" style="top:272.19px;left:861px;width:80px"><a>点击查看</a></div>
<div class="row" style="top:286.60px;height:25.82px;background:#ffffff"></div>
<div class="hl" style="top:312.42px"></div>
<div class="c sci" style="top:299.01px;left:357px">Ruscus aculeata</div>
<div class="c cn" style="top:299.01px;left:580px;width:56px">百合科</div>
<div class="c cn" style="top:299.01px;left:636px;width:92px">假叶树属</div>
<div class="c cn" style="top:299.01px;left:728px;width:92px">假叶树</div>
<div class="c cn" style="top:299.01px;left:820px;width:41px">树木</div>
<div class="c cn" style="top:299.01px;left:861px;width:80px"><a>点击查看</a></div>
<div class="row" style="top:313.42px;height:25.82px;background:#eef2fb"></div>
<div class="hl" style="top:339.24px"></div>
<div class="c sci" style="top:325.83px;left:357px">Yucca gloriosa</div>
<div class="c cn" style="top:325.83px;left:580px;width:56px">百合科</div>
<div class="c cn" style="top:325.83px;left:636px;width:92px">丝兰属</div>
<div class="c cn" style="top:325.83px;left:728px;width:92px">凤尾兰</div>
<div class="c cn" style="top:325.83px;left:820px;width:41px">树木</div>
<div class="c cn" style="top:325.83px;left:861px;width:80px"><a>点击查看</a></div>
<div class="row" style="top:340.24px;height:25.82px;background:#ffffff"></div>
<div class="hl" style="top:366.06px"></div>
<div class="c sci" style="top:352.65px;left:357px">Yucca smalliana</div>
<div class="c cn" style="top:352.65px;left:580px;width:56px">百合科</div>
<div class="c cn" style="top:352.65px;left:636px;width:92px">丝兰属</div>
<div class="c cn" style="top:352.65px;left:728px;width:92px">丝兰</div>
<div class="c cn" style="top:352.65px;left:820px;width:41px">树木</div>
<div class="c cn" style="top:352.65px;left:861px;width:80px"><a>点击查看</a></div>
<div class="row" style="top:367.06px;height:25.82px;background:#eef2fb"></div>
<div class="hl" style="top:392.88px"></div>
<div class="c sci" style="top:379.47px;left:357px">Heterosmilax yunnanensis</div>
<div class="c cn" style="top:379.47px;left:580px;width:56px">百合科</div>
<div class="c cn" style="top:379.47px;left:636px;width:92px">肖菝葜属</div>
<div class="c cn" style="top:379.47px;left:728px;width:92px">短柱肖菝葜</div>
<div class="c cn" style="top:379.47px;left:820px;width:41px">草花</div>
<div class="c cn" style="top:379.47px;left:861px;width:80px"><a>点击查看</a></div>
<div class="row" style="top:393.88px;height:25.82px;background:#ffffff"></div>
<div class="hl" style="top:419.70px"></div>
<div class="c sci" style="top:406.29px;left:357px">Hemerocallis fulva</div>
<div class="c cn" style="top:406.29px;left:580px;width:56px">百合科</div>
<div class="c cn" style="top:406.29px;left:636px;width:92px">萱草属</div>
<div class="c cn" style="top:406.29px;left:728px;width:92px">萱草</div>
<div class="c cn" style="top:406.29px;left:820px;width:41px">草花</div>
<div class="c cn" style="top:406.29px;left:861px;width:80px"><a>点击查看</a></div>
<div class="row" style="top:420.70px;height:25.82px;background:#eef2fb"></div>
<div class="hl" style="top:446.52px"></div>
<div class="c sci" style="top:433.11px;left:357px">Liriope spicata</div>
<div class="c cn" style="top:433.11px;left:580px;width:56px">百合科</div>
<div class="c cn" style="top:433.11px;left:636px;width:92px">沿阶草属</div>
<div class="c cn" style="top:433.11px;left:728px;width:92px">麦冬</div>
<div class="c cn" style="top:433.11px;left:820px;width:41px">草花</div>
<div class="c cn" style="top:433.11px;left:861px;width:80px"><a>点击查看</a></div>
<div class="row" style="top:447.52px;height:25.82px;background:#ffffff"></div>
<div class="hl" style="top:473.34px"></div>
<div class="c sci" style="top:459.93px;left:357px">Ophiopogon japonicus</div>
<div class="c cn" style="top:459.93px;left:580px;width:56px">百合科</div>
<div class="c cn" style="top:459.93px;left:636px;width:92px">沿阶草属</div>
<div class="c cn" style="top:459.93px;left:728px;width:92px">麦冬</div>
<div class="c cn" style="top:459.93px;left:820px;width:41px">草花</div>
<div class="c cn" style="top:459.93px;left:861px;width:80px"><a>点击查看</a></div>
<div class="row" style="top:474.34px;height:25.82px;background:#eef2fb"></div>
<div class="hl" style="top:500.16px"></div>
<div class="c sci" style="top:486.75px;left:357px">Hosta plantaginea</div>
<div class="c cn" style="top:486.75px;left:580px;width:56px">百合科</div>
<div class="c cn" style="top:486.75px;left:636px;width:92px">玉簪属</div>
<div class="c cn" style="top:486.75px;left:728px;width:92px">玉簪</div>
<div class="c cn" style="top:486.75px;left:820px;width:41px">草花</div>
<div class="c cn" style="top:486.75px;left:861px;width:80px"><a>点击查看</a></div>
<div class="row" style="top:501.16px;height:25.82px;background:#ffffff"></div>
<div class="hl" style="top:526.98px"></div>
<div class="c sci" style="top:513.57px;left:357px">Aspidistra elatior</div>
<div class="c cn" style="top:513.57px;left:580px;width:56px">百合科</div>
<div class="c cn" style="top:513.57px;left:636px;width:92px">蜘蛛抱蛋属</div>
<div class="c cn" style="top:513.57px;left:728px;width:92px">蜘蛛抱蛋</div>
<div class="c cn" style="top:513.57px;left:820px;width:41px">草花</div>
<div class="c cn" style="top:513.57px;left:861px;width:80px"><a>点击查看</a></div>
<div class="vl" style="left:580px;top:133px;height:394px"></div>
<div class="vl" style="left:636px;top:133px;height:394px"></div>
<div class="vl" style="left:728px;top:133px;height:394px"></div>
<div class="vl" style="left:820px;top:133px;height:394px"></div>
<div class="vl" style="left:861px;top:133px;height:394px"></div>
<svg class="abs" style="left:360px;top:548px" width="430" height="30" viewBox="360 548 430 30">
<g font-family="Liberation Serif" font-weight="bold" font-size="15" fill="#fff" stroke="#fff" stroke-width="3" stroke-linejoin="round" opacity=".9">
<text transform="translate(370.0,569) scale(0.92,1.05)">网</text>
<text transform="translate(387.3,569) scale(0.92,1.05)">站</text>
<text transform="translate(404.6,569) scale(0.92,1.05)">地</text>
<text transform="translate(421.9,569) scale(0.92,1.05)">图</text>
<text transform="translate(481.0,569) scale(0.92,1.05)">使</text>
<text transform="translate(498.3,569) scale(0.92,1.05)">用</text>
<text transform="translate(515.6,569) scale(0.92,1.05)">说</text>
<text transform="translate(532.9,569) scale(0.92,1.05)">明</text>
<text transform="translate(593.0,569) scale(0.92,1.05)">关</text>
<text transform="translate(610.3,569) scale(0.92,1.05)">于</text>
<text transform="translate(627.6,569) scale(0.92,1.05)">我</text>
<text transform="translate(644.9,569) scale(0.92,1.05)">们</text>
<text transform="translate(704.0,569) scale(0.92,1.05)">管</text>
<text transform="translate(721.3,569) scale(0.92,1.05)">理</text>
<text transform="translate(738.6,569) scale(0.92,1.05)">登</text>
<text transform="translate(755.9,569) scale(0.92,1.05)">录</text>
</g>
<g font-family="Liberation Serif" font-weight="bold" font-size="15" fill="#127812" stroke="#127812" stroke-width="0.3">
<text transform="translate(370.0,569) scale(0.92,1.05)">网</text>
<text transform="translate(387.3,569) scale(0.92,1.05)">站</text>
<text transform="translate(404.6,569) scale(0.92,1.05)">地</text>
<text transform="translate(421.9,569) scale(0.92,1.05)">图</text>
<text transform="translate(481.0,569) scale(0.92,1.05)">使</text>
<text transform="translate(498.3,569) scale(0.92,1.05)">用</text>
<text transform="translate(515.6,569) scale(0.92,1.05)">说</text>
<text transform="translate(532.9,569) scale(0.92,1.05)">明</text>
<text transform="translate(593.0,569) scale(0.92,1.05)">关</text>
<text transform="translate(610.3,569) scale(0.92,1.05)">于</text>
<text transform="translate(627.6,569) scale(0.92,1.05)">我</text>
<text transform="translate(644.9,569) scale(0.92,1.05)">们</text>
<text transform="translate(704.0,569) scale(0.92,1.05)">管</text>
<text transform="translate(721.3,569) scale(0.92,1.05)">理</text>
<text transform="translate(738.6,569) scale(0.92,1.05)">登</text>
<text transform="translate(755.9,569) scale(0.92,1.05)">录</text>
</g></svg>
<!-- scrollbar -->
<div class="abs" style="left:1076px;top:0;width:14px;height:590px;background-color:#e9e7e1;background-image:repeating-conic-gradient(#f6f5f2 0 25%,#e2dfd8 0 50%);background-size:2px 2px"></div>
<div class="abs" style="left:1076px;top:0;width:14px;height:14px;background:#d4d0c8;border:1px solid;border-color:#f4f2ee #404040 #404040 #f4f2ee;box-shadow:inset -1px -1px #808080"></div>
<div class="abs" style="left:1079px;top:5px;width:0;height:0;border-left:4px solid transparent;border-right:4px solid transparent;border-bottom:4px solid #777"></div>
<div class="abs" style="left:1076px;top:576px;width:14px;height:14px;background:#d4d0c8;border:1px solid;border-color:#f4f2ee #404040 #404040 #f4f2ee;box-shadow:inset -1px -1px #808080"></div>
<div class="abs" style="left:1079px;top:581px;width:0;height:0;border-left:4px solid transparent;border-right:4px solid transparent;border-top:4px solid #777"></div>
</body></html>
